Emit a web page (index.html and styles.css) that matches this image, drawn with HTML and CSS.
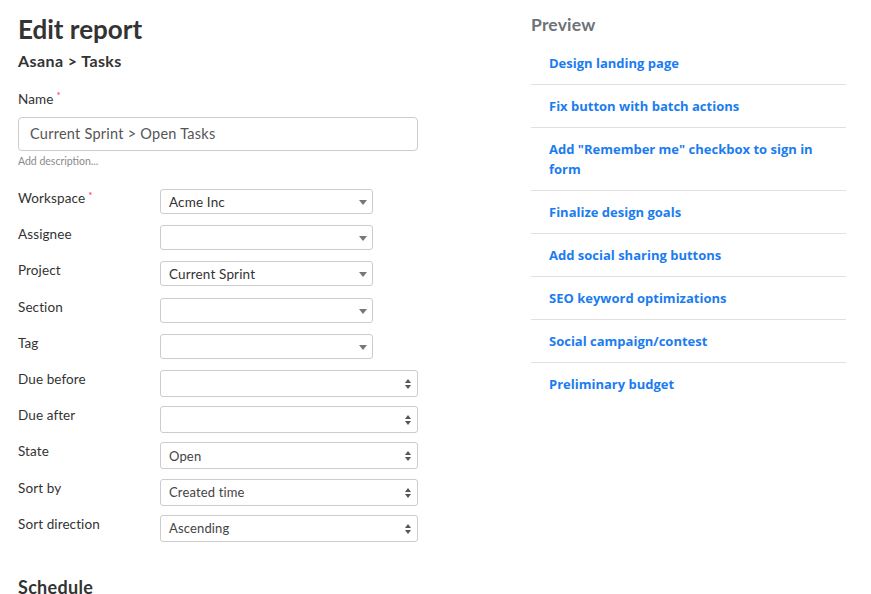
FILE: index.html
```html
<!DOCTYPE html>
<html lang="en">
<head>
  <meta charset="UTF-8" />
  <title>Edit report</title>
  <link rel="stylesheet" href="styles.css">
</head>
<body>
  <div class="page">
    <div class="editor">
      <h1>Edit report</h1>
      <h2>Asana &gt; Tasks</h2>

      <div class="field-label">Name<span class="req">*</span></div>
      <div class="text-input">Current Sprint &gt; Open Tasks</div>
      <div class="hint">Add description...</div>

      <div class="form">
        <div class="row">
          <div class="label">Workspace<span class="req">*</span></div>
          <div class="select short">Acme Inc
            <svg class="caret" width="8" height="5" viewBox="0 0 8 5"><path d="M0 0h8L4 5z" fill="#777"/></svg>
          </div>
        </div>
        <div class="row">
          <div class="label">Assignee</div>
          <div class="select short">
            <svg class="caret" width="8" height="5" viewBox="0 0 8 5"><path d="M0 0h8L4 5z" fill="#777"/></svg>
          </div>
        </div>
        <div class="row">
          <div class="label">Project</div>
          <div class="select short">Current Sprint
            <svg class="caret" width="8" height="5" viewBox="0 0 8 5"><path d="M0 0h8L4 5z" fill="#777"/></svg>
          </div>
        </div>
        <div class="row">
          <div class="label">Section</div>
          <div class="select short">
            <svg class="caret" width="8" height="5" viewBox="0 0 8 5"><path d="M0 0h8L4 5z" fill="#777"/></svg>
          </div>
        </div>
        <div class="row">
          <div class="label">Tag</div>
          <div class="select short">
            <svg class="caret" width="8" height="5" viewBox="0 0 8 5"><path d="M0 0h8L4 5z" fill="#777"/></svg>
          </div>
        </div>
        <div class="row">
          <div class="label">Due before</div>
          <div class="select wide">
            <svg class="updown" width="6" height="10" viewBox="0 0 6 10"><path d="M3 0l3 4H0zM0 6h6l-3 4z" fill="#555"/></svg>
          </div>
        </div>
        <div class="row">
          <div class="label">Due after</div>
          <div class="select wide">
            <svg class="updown" width="6" height="10" viewBox="0 0 6 10"><path d="M3 0l3 4H0zM0 6h6l-3 4z" fill="#555"/></svg>
          </div>
        </div>
        <div class="row">
          <div class="label">State</div>
          <div class="select wide">Open
            <svg class="updown" width="6" height="10" viewBox="0 0 6 10"><path d="M3 0l3 4H0zM0 6h6l-3 4z" fill="#555"/></svg>
          </div>
        </div>
        <div class="row">
          <div class="label">Sort by</div>
          <div class="select wide">Created time
            <svg class="updown" width="6" height="10" viewBox="0 0 6 10"><path d="M3 0l3 4H0zM0 6h6l-3 4z" fill="#555"/></svg>
          </div>
        </div>
        <div class="row">
          <div class="label">Sort direction</div>
          <div class="select wide">Ascending
            <svg class="updown" width="6" height="10" viewBox="0 0 6 10"><path d="M3 0l3 4H0zM0 6h6l-3 4z" fill="#555"/></svg>
          </div>
        </div>
      </div>

      <h3>Schedule</h3>
    </div>

    <div class="preview">
      <h2 class="preview-title">Preview</h2>
      <ul class="tasks">
        <li>Design landing page</li>
        <li>Fix button with batch actions</li>
        <li>Add "Remember me" checkbox to sign in form</li>
        <li>Finalize design goals</li>
        <li>Add social sharing buttons</li>
        <li>SEO keyword optimizations</li>
        <li>Social campaign/contest</li>
        <li>Preliminary budget</li>
      </ul>
    </div>
  </div>
</body>
</html>
```

FILE: styles.css
```css
* {
  box-sizing: border-box;
  margin: 0;
  padding: 0;
}

body {
  font-family: 'Lato', 'Noto Sans', sans-serif;
  color: #333;
  background: #fff;
  overflow: hidden;
}

.page {
  display: flex;
  padding: 0 18px;
}

.editor {
  width: 482px;
}

h1 {
  font-size: 26px;
  line-height: 32px;
  font-weight: 700;
  margin-top: 13px;
  color: #333;
}

h2 {
  font-size: 16px;
  line-height: 20px;
  font-weight: 700;
  letter-spacing: 0.4px;
  margin-top: 6px;
}

.field-label {
  font-size: 13.5px;
  line-height: 20px;
  letter-spacing: 0.1px;
  margin-top: 18px;
}

.req {
  color: #e8384f;
  font-size: 10px;
  vertical-align: top;
  line-height: 12px;
  margin-left: 3px;
}

.text-input {
  margin-top: 8px;
  width: 400px;
  height: 34px;
  border: 1px solid #ccc;
  border-radius: 4px;
  padding: 0 11px;
  font-size: 14.5px;
  letter-spacing: 0.25px;
  line-height: 32px;
  color: #555;
}

.hint {
  font-size: 10.5px;
  line-height: 14px;
  margin-top: 3px;
  color: #8a8a8a;
}

.form {
  margin-top: 21px;
}

.row {
  display: flex;
  height: 36.2px;
}

.label {
  width: 142px;
  font-size: 13.5px;
  letter-spacing: 0.1px;
  line-height: 18px;
  color: #333;
}

.select {
  position: relative;
  border: 1px solid #ccc;
  border-radius: 3px;
  padding: 0 8px;
  font-size: 13.5px;
  letter-spacing: 0.15px;
  color: #333;
  display: flex;
  align-items: center;
}

.select.short {
  width: 213px;
  height: 25px;
}

.select.wide {
  width: 258px;
  height: 27px;
  font-size: 13px;
  color: #444;
}

.caret {
  position: absolute;
  right: 5px;
  top: 10px;
}

.updown {
  position: absolute;
  right: 6px;
  top: 8px;
}

h3 {
  font-size: 18px;
  line-height: 22px;
  font-weight: 700;
  letter-spacing: 0.3px;
  margin-top: 25px;
}

.preview {
  margin-left: 31px;
  width: 315px;
}

.preview-title {
  font-size: 17.5px;
  line-height: 22px;
  font-weight: 700;
  letter-spacing: 0.2px;
  color: #6d7278;
  margin-top: 14px;
}

.tasks {
  list-style: none;
  margin-top: 6px;
}

.tasks li {
  padding: 11px 18px;
  font-family: 'Open Sans', 'Lato', sans-serif;
  font-size: 13px;
  line-height: 20px;
  font-weight: 700;
  color: #1b7cf0;
  border-bottom: 1px solid #e0e0e0;
}

.tasks li:last-child {
  border-bottom: none;
}
```
